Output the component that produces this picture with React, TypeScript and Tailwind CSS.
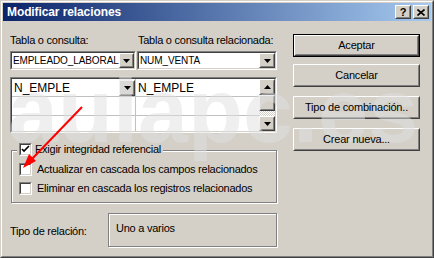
import React from "react";

function Raised({ className = "", children }: { className?: string; children?: React.ReactNode }) {
  return (
    <div className={`border border-t-white border-l-white border-b-[#404040] border-r-[#404040] bg-[#d4d0c8] ${className}`}>
      <div className="w-full h-full border border-t-[#d4d0c8] border-l-[#d4d0c8] border-b-[#808080] border-r-[#808080] flex items-center justify-center">
        {children}
      </div>
    </div>
  );
}

function Sunken({ className = "", children }: { className?: string; children?: React.ReactNode }) {
  return (
    <div className={`border border-t-[#808080] border-l-[#808080] border-b-white border-r-white ${className}`}>
      <div className="w-full h-full border border-t-[#404040] border-l-[#404040] border-b-[#d4d0c8] border-r-[#d4d0c8] bg-white flex">
        {children}
      </div>
    </div>
  );
}

function DownArrow() {
  return (
    <svg width="7" height="4" viewBox="0 0 7 4" className="relative z-20">
      <path d="M0 0H7L3.5 4Z" fill="#000" />
    </svg>
  );
}
function UpArrow() {
  return (
    <svg width="7" height="4" viewBox="0 0 7 4" className="relative z-20">
      <path d="M0 4H7L3.5 0Z" fill="#000" />
    </svg>
  );
}

function Check({ checked }: { checked?: boolean }) {
  return (
    <Sunken className="w-[13px] h-[13px] shrink-0">
      {checked && (
        <svg width="9" height="9" viewBox="0 0 9 9" className="m-auto relative z-20">
          <path d="M1 4L3 6L8 1" stroke="#000" strokeWidth="1.6" fill="none" />
        </svg>
      )}
    </Sunken>
  );
}

function Btn({ label, def }: { label: string; def?: boolean }) {
  if (def) {
    return (
      <div className="border border-black h-[23px] w-[127px]">
        <Raised className="w-full h-full">
          <span className="relative z-20 text-[11px] tracking-[-0.2px] text-black">{label}</span>
        </Raised>
      </div>
    );
  }
  return (
    <Raised className="h-[23px] w-[127px]">
      <span className="relative z-20 text-[11px] tracking-[-0.2px] text-black">{label}</span>
    </Raised>
  );
}

export default function App() {
  return (
    <div className="relative w-[434px] h-[258px] overflow-hidden font-['Liberation_Sans',Arial,sans-serif] text-black">
      <div className="w-full h-full border border-t-[#d4d0c8] border-l-[#d4d0c8] border-b-[#404040] border-r-[#404040] bg-[#d4d0c8]">
        <div className="w-full h-full border border-t-white border-l-white border-b-[#808080] border-r-[#808080] p-px flex flex-col">
          {/* Title bar */}
          <div className="h-[18px] shrink-0 flex items-center bg-[linear-gradient(to_right,#0a246a,#a6caf0)] pl-[4px] pr-[2px]">
            <span className="text-white font-bold text-[12px] leading-none tracking-[-0.1px]">Modificar relaciones</span>
            <div className="ml-auto flex gap-[2px]">
              <Raised className="w-[16px] h-[14px]">
                <span className="font-bold text-[11px] leading-none">?</span>
              </Raised>
              <Raised className="w-[16px] h-[14px]">
                <svg width="8" height="7" viewBox="0 0 8 7">
                  <path d="M0.5 0.5L7.5 6.5M7.5 0.5L0.5 6.5" stroke="#000" strokeWidth="1.6" />
                </svg>
              </Raised>
            </div>
          </div>

          {/* Body */}
          <div className="flex flex-1">
            {/* Left column */}
            <div className="ml-[7px] w-[267px] flex flex-col">
              <div className="mt-[13px] h-[13px] flex text-[11px] leading-[13px] tracking-[-0.25px]">
                <span className="w-[128px]">Tabla o consulta:</span>
                <span>Tabla o consulta relacionada:</span>
              </div>
              <div className="mt-[4px] flex gap-[1px]">
                <Sunken className="w-[126px] h-[19px]">
                  <span className="relative z-20 flex-1 text-[10px] leading-[15px] pl-[1px] tracking-[-0.1px]">EMPLEADO_LABORAL</span>
                  <Raised className="w-[16px] h-[15px]"><DownArrow /></Raised>
                </Sunken>
                <Sunken className="w-[140px] h-[19px]">
                  <span className="relative z-20 flex-1 text-[10px] leading-[15px] pl-[1px] tracking-[-0.1px]">NUM_VENTA</span>
                  <Raised className="w-[16px] h-[15px]"><DownArrow /></Raised>
                </Sunken>
              </div>

              {/* Grid */}
              <Sunken className="mt-[7px] h-[56px] w-[267px]">
                <div className="flex w-full">
                  <div className="flex flex-col w-[247px]">
                    <div className="h-[18px] flex border-b border-[#c0c0c0]">
                      <div className="w-[124px] border-r border-[#c0c0c0] flex items-center">
                        <span className="relative z-20 flex-1 pl-[2px] text-[12px] leading-none">N_EMPLE</span>
                        <Raised className="w-[16px] h-[16px]"><DownArrow /></Raised>
                      </div>
                      <div className="flex-1 flex items-center pl-[2px]">
                        <span className="relative z-20 text-[12px] leading-none">N_EMPLE</span>
                      </div>
                    </div>
                    <div className="h-[19px] flex border-b border-[#c0c0c0]">
                      <div className="w-[124px] border-r border-[#c0c0c0]" />
                      <div className="flex-1" />
                    </div>
                    <div className="flex-1 flex">
                      <div className="w-[124px] border-r border-[#c0c0c0]" />
                      <div className="flex-1" />
                    </div>
                  </div>
                  <div className="w-[16px] flex flex-col">
                    <Raised className="w-[16px] h-[16px] shrink-0"><UpArrow /></Raised>
                    <Raised className="w-[16px] h-[16px] shrink-0" />
                    <div className="flex-1 bg-[repeating-conic-gradient(#ffffff_0_25%,#d4d0c8_0_50%)] bg-[length:2px_2px]" />
                    <Raised className="w-[16px] h-[15px] shrink-0"><DownArrow /></Raised>
                  </div>
                </div>
              </Sunken>

              {/* Group */}
              <div className="relative mt-[10px] h-[60px]">
                <div className="absolute left-[1px] right-0 top-[7px] bottom-0 border border-[#808080] shadow-[inset_1px_1px_0_#ffffff,1px_1px_0_#ffffff]" />
                <div className="relative flex flex-col pl-[9px] text-[11px] tracking-[-0.25px]">
                  <div className="flex items-center h-[13px]">
                    <div className="flex items-center bg-[#d4d0c8] -ml-[2px] pl-[2px] pr-[2px]">
                      <Check checked />
                      <span className="ml-[3px] leading-[13px]">Exigir integridad referencial</span>
                    </div>
                  </div>
                  <div className="flex items-center h-[13px] mt-[7px]">
                    <Check />
                    <span className="ml-[5px] leading-[13px]">Actualizar en cascada los campos relacionados</span>
                  </div>
                  <div className="flex items-center h-[13px] mt-[6px]">
                    <Check />
                    <span className="ml-[5px] leading-[13px]">Eliminar en cascada los registros relacionados</span>
                  </div>
                </div>
              </div>

              {/* Tipo de relación */}
              <div className="mt-[10px] flex items-center">
                <span className="w-[98px] text-[11px] tracking-[-0.25px] mt-[3px]">Tipo de relación:</span>
                <div className="w-[169px] h-[34px] border border-[#808080] shadow-[inset_1px_1px_0_#ffffff,1px_1px_0_#ffffff] pl-[7px] pt-[8px] text-[11px] tracking-[-0.25px] leading-[13px]">
                  Uno a varios
                </div>
              </div>
            </div>

            {/* Right column */}
            <div className="ml-[16px] flex flex-col">
              <div className="mt-[13px]"><Btn label="Aceptar" def /></div>
              <div className="mt-[7px]"><Btn label="Cancelar" /></div>
              <div className="mt-[9px]"><Btn label="Tipo de combinación.." /></div>
              <div className="mt-[9px]"><Btn label="Crear nueva..." /></div>
            </div>
          </div>
        </div>
      </div>

      {/* Watermark (under text, over surfaces) */}
      <div className="pointer-events-none absolute z-10 left-[8px] top-[66px] text-[90px] leading-none font-bold text-[rgba(224,224,224,0.5)] whitespace-nowrap">
        aulapc.es
      </div>

      {/* Red arrow */}
      <svg className="pointer-events-none absolute z-30 left-0 top-0" width="434" height="258" viewBox="0 0 434 258">
        <line x1="82" y1="107" x2="31" y2="160" stroke="#ff0000" strokeWidth="2" />
        <polygon points="23,168 36,161 29,154" fill="#ff0000" />
      </svg>
    </div>
  );
}
